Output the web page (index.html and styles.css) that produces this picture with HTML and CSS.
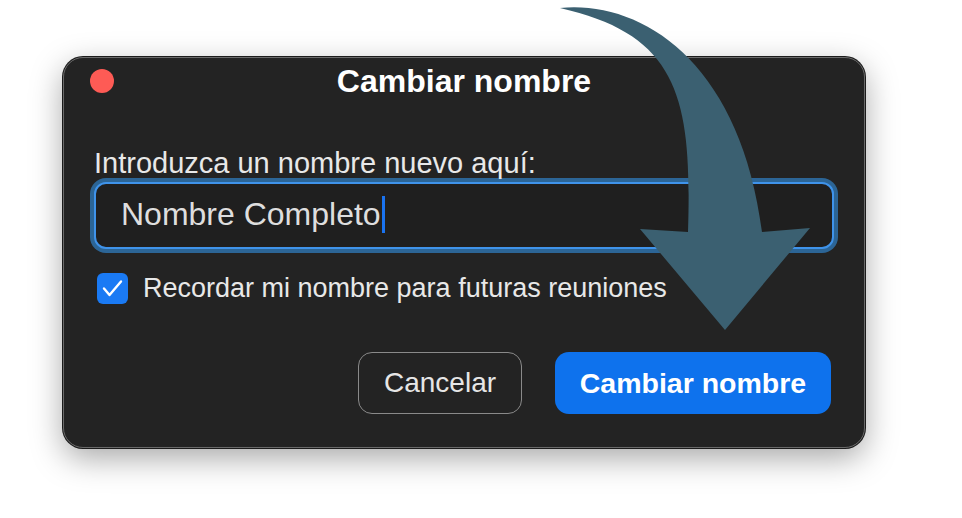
FILE: index.html
```html
<!DOCTYPE html>
<html lang="es">
<head>
    <meta charset="UTF-8">
    <meta name="viewport" content="width=device-width, initial-scale=1.0">
    <title>Cambiar nombre</title>
    <link rel="stylesheet" href="styles.css">
</head>
<body>
    <div class="page">
        <div class="dialog">
            <div class="dialog-header">
                <span class="close-dot"></span>
                <h1 class="dialog-title">Cambiar nombre</h1>
                <span></span>
            </div>
            <div class="dialog-body">
                <label class="field-label">Introduzca un nombre nuevo aquí:</label>
                <div class="name-input">Nombre Completo<span class="caret"></span></div>
                <div class="remember">
                    <span class="checkbox">
                        <svg width="31" height="31" viewBox="0 0 31 31">
                            <polyline points="7,15.5 12.5,22 24,8.5" fill="none" stroke="#fff" stroke-width="2.4" stroke-linecap="round" stroke-linejoin="round"/>
                        </svg>
                    </span>
                    <span>Recordar mi nombre para futuras reuniones</span>
                </div>
                <div class="actions">
                    <button class="btn btn-cancel">Cancelar</button>
                    <button class="btn btn-primary">Cambiar nombre</button>
                </div>
            </div>
        </div>

        <!-- curved pointer sitting over the dialog -->
        <svg class="hint-arrow" viewBox="0 0 962 518">
            <path d="M560 8 C640 0 740 60 762 232 L810 228 L725 330 L640 229 L688 232 C692 100 680 35 560 8 Z" fill="#3b6071"/>
        </svg>
    </div>
</body>
</html>
```

FILE: styles.css
```css
body {
    margin: 0;
    background-color: #fff;
    font-family: "Liberation Sans", Arial, sans-serif;
}

.page {
    position: relative;
    width: 962px;
    height: 518px;
    padding: 57px 0 0 63px;
    box-sizing: border-box;
}

.dialog {
    width: 802px;
    height: 391px;
    box-sizing: border-box;
    background-color: #232323;
    border: 1px solid #6a6a6a;
    border-radius: 20px;
    box-shadow: 0 0 0 1px #1b1b1b, 0 10px 32px rgba(0, 0, 0, 0.35);
    color: #e8e8e8;
}

.dialog-header {
    display: grid;
    grid-template-columns: 1fr auto 1fr;
    align-items: center;
    height: 46px;
    padding: 0 26px;
}

.close-dot {
    width: 24px;
    height: 24px;
    border-radius: 50%;
    background-color: #fe5b55;
}

.dialog-title {
    margin: 0;
    font-size: 32px;
    font-weight: 700;
    line-height: 1;
    color: #fff;
}

.dialog-body {
    padding: 42px 30px 0;
}

.field-label {
    display: block;
    font-size: 29px;
    line-height: 34px;
    margin-bottom: 2px;
}

/* focused text field: bright edge plus darker focus ring */
.name-input {
    display: flex;
    align-items: center;
    height: 67px;
    box-sizing: border-box;
    padding: 0 0 2px 25px;
    background-color: #1f1f1f;
    border: 2px solid #3f93ea;
    border-radius: 12px;
    box-shadow: 0 0 0 4px #2c6596;
    font-size: 32px;
    color: #dedede;
}

.caret {
    width: 3px;
    height: 37px;
    margin-left: 1px;
    background-color: #1a73f0;
}

.remember {
    display: flex;
    align-items: center;
    gap: 15px;
    margin: 24px 0 0 3px;
    font-size: 27px;
}

.checkbox {
    display: flex;
    width: 31px;
    height: 31px;
    border-radius: 6px;
    background-color: #1a7af4;
}

.actions {
    display: flex;
    justify-content: flex-end;
    gap: 33px;
    margin: 48px 3px 0 0;
}

.btn {
    height: 62px;
    padding: 0;
    border-radius: 14px;
    font-family: inherit;
    font-size: 28px;
    cursor: pointer;
}

.btn-cancel {
    width: 164px;
    background-color: transparent;
    border: 1.5px solid #8a8a8a;
    color: #e6e6e6;
}

.btn-primary {
    width: 276px;
    background-color: #0e72ed;
    border: none;
    color: #fff;
    font-weight: 700;
    font-size: 28.5px;
}

.hint-arrow {
    position: absolute;
    top: 0;
    left: 0;
    width: 962px;
    height: 518px;
    pointer-events: none;
}
```
